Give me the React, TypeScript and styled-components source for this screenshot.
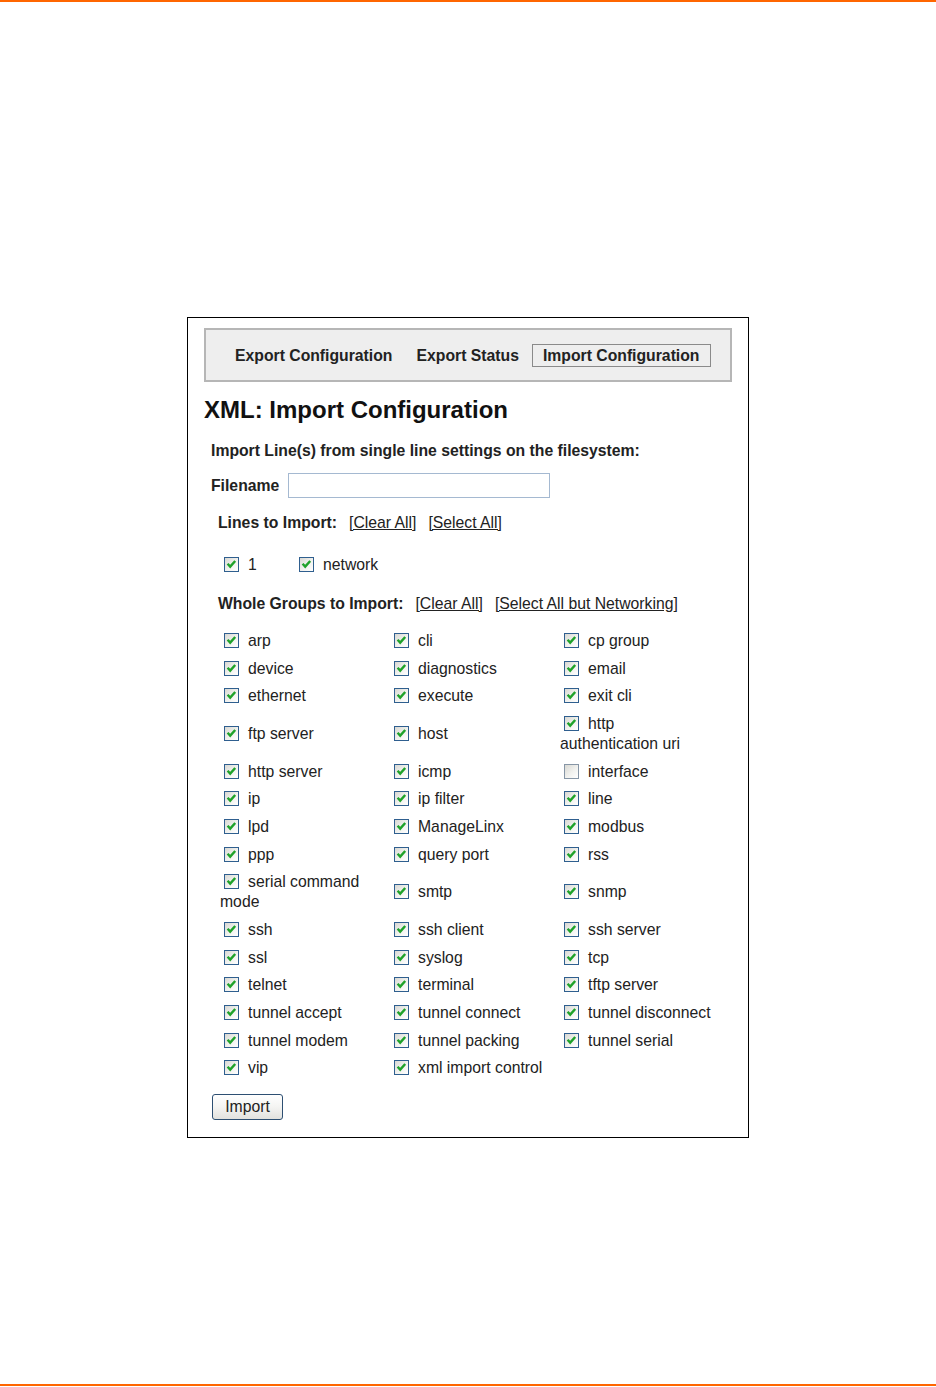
import React from 'react';
import styled, { createGlobalStyle } from 'styled-components';

const GlobalStyle = createGlobalStyle`
  html, body {
    margin: 0;
    padding: 0;
    background: #ffffff;
  }
  body {
    font-family: "Liberation Sans", Arial, sans-serif;
    font-size: 15.75px;
    color: #222222;
  }
`;

const Page = styled.div`
  width: 936px;
  min-height: 1387px;
  display: flex;
  flex-direction: column;
`;

const Rule = styled.div`
  height: 2px;
  background: #ff6600;
  flex-shrink: 0;
`;

const BottomRule = styled(Rule)`
  margin-bottom: 1px;
`;

const Main = styled.main`
  flex: 1;
  padding-top: 315px;
`;

const Panel = styled.section`
  width: 562px;
  box-sizing: border-box;
  margin: 0 auto;
  border: 1px solid #000000;
  padding: 10px 16px 17px 16px;
`;

const TabBar = styled.nav`
  height: 54px;
  box-sizing: border-box;
  border: 2px solid #b6b6b6;
  background: #eeeeee;
  display: flex;
  align-items: center;
  gap: 2px;
  padding-left: 18px;
`;

const Tab = styled.span<{ $active?: boolean }>`
  height: 23px;
  box-sizing: border-box;
  line-height: 21px;
  padding: 0 10px;
  border: 1px solid ${p => (p.$active ? '#8a8a8a' : 'transparent')};
  font-weight: bold;
  color: #222222;
  white-space: nowrap;
`;

const Heading = styled.h2`
  margin: 14px 0 0 0;
  font-size: 24px;
  line-height: 28px;
  font-weight: bold;
  color: #111111;
`;

const Form = styled.div`
  padding-left: 7px;
`;

const Intro = styled.div`
  margin-top: 17px;
  line-height: 20px;
  font-weight: bold;
`;

const FilenameRow = styled.div`
  margin-top: 12px;
  display: flex;
  align-items: center;
  gap: 9px;
  height: 25px;
`;

const Label = styled.span`
  font-weight: bold;
  white-space: nowrap;
`;

const TextInput = styled.input`
  width: 262px;
  height: 25px;
  box-sizing: border-box;
  border: 1px solid #a5b9d1;
  padding: 2px 4px;
  font-family: inherit;
  font-size: 15px;
  outline: none;
`;

const SectionHeader = styled.div<{ $top: number }>`
  margin-top: ${p => p.$top}px;
  margin-left: 7px;
  display: flex;
  align-items: center;
  gap: 12px;
  line-height: 20px;
`;

const LinkText = styled.a`
  color: #222222;
  text-decoration: underline;
  cursor: pointer;
  white-space: nowrap;
`;

const LineChoices = styled.div`
  margin-top: 22px;
  margin-left: 9px;
  display: flex;
  line-height: 20px;
`;

const LineChoice = styled.label<{ $width?: number }>`
  ${p => (p.$width ? `width: ${p.$width}px;` : '')}
  white-space: nowrap;
`;

const GroupGrid = styled.div`
  margin-top: 13px;
  margin-left: 9px;
  display: grid;
  grid-template-columns: repeat(3, 170px);
`;

const Cell = styled.label`
  display: flex;
  align-items: center;
  padding: 3.85px 0;
`;

const CellText = styled.span`
  display: block;
  line-height: 20px;
`;

const Box = styled.span<{ $checked: boolean }>`
  display: inline-block;
  position: relative;
  width: 15px;
  height: 15px;
  box-sizing: border-box;
  margin: 0 9px 0 4px;
  vertical-align: -2px;
  border: 1px solid ${p => (p.$checked ? '#2f5f8f' : '#8796a6')};
  background: linear-gradient(135deg, #d8d8d3 0%, #f2f2ef 55%, #ffffff 100%);

  svg {
    position: absolute;
    left: 0;
    top: 0;
  }
`;

const ImportButton = styled.button`
  margin: 12px 0 0 1px;
  width: 71px;
  height: 26px;
  box-sizing: border-box;
  padding: 0;
  border: 1px solid #2d4f72;
  border-radius: 3px;
  background: linear-gradient(#ffffff 0%, #f4f4f2 50%, #e2e2de 100%);
  font-family: inherit;
  font-size: 15.75px;
  color: #222222;
  cursor: pointer;
`;

const Checkbox = ({ checked = true }: { checked?: boolean }) => (
  <Box $checked={checked}>
    {checked && (
      <svg width="13" height="13" viewBox="0 0 13 13">
        <path d="M2.6 5.8 L5.2 8.6 L10.2 3" fill="none" stroke="#1fa22a" strokeWidth="2.4" />
      </svg>
    )}
  </Box>
);

const groups: [string, boolean][] = [
  ['arp', true], ['cli', true], ['cp group', true],
  ['device', true], ['diagnostics', true], ['email', true],
  ['ethernet', true], ['execute', true], ['exit cli', true],
  ['ftp server', true], ['host', true], ['http authentication\u00a0uri', true],
  ['http server', true], ['icmp', true], ['interface', false],
  ['ip', true], ['ip filter', true], ['line', true],
  ['lpd', true], ['ManageLinx', true], ['modbus', true],
  ['ppp', true], ['query port', true], ['rss', true],
  ['serial command mode', true], ['smtp', true], ['snmp', true],
  ['ssh', true], ['ssh client', true], ['ssh server', true],
  ['ssl', true], ['syslog', true], ['tcp', true],
  ['telnet', true], ['terminal', true], ['tftp server', true],
  ['tunnel accept', true], ['tunnel connect', true], ['tunnel disconnect', true],
  ['tunnel modem', true], ['tunnel packing', true], ['tunnel serial', true],
  ['vip', true], ['xml import control', true],
];

const App: React.FC = () => {
  return (
    <>
      <GlobalStyle />
      <Page>
        <Rule />
        <Main>
          <Panel>
            <TabBar>
              <Tab>Export Configuration</Tab>
              <Tab>Export Status</Tab>
              <Tab $active>Import Configuration</Tab>
            </TabBar>

            <Heading>XML: Import Configuration</Heading>

            <Form>
              <Intro>Import Line(s) from single line settings on the filesystem:</Intro>

              <FilenameRow>
                <Label>Filename</Label>
                <TextInput type="text" />
              </FilenameRow>

              <SectionHeader $top={15}>
                <Label>Lines to Import:</Label>
                <LinkText>[Clear All]</LinkText>
                <LinkText>[Select All]</LinkText>
              </SectionHeader>

              <LineChoices>
                <LineChoice $width={75}>
                  <Checkbox />1
                </LineChoice>
                <LineChoice>
                  <Checkbox />network
                </LineChoice>
              </LineChoices>

              <SectionHeader $top={19}>
                <Label>Whole Groups to Import:</Label>
                <LinkText>[Clear All]</LinkText>
                <LinkText>[Select All but Networking]</LinkText>
              </SectionHeader>

              <GroupGrid>
                {groups.map(([name, checked]) => (
                  <Cell key={name}>
                    <CellText>
                      <Checkbox checked={checked} />
                      {name}
                    </CellText>
                  </Cell>
                ))}
              </GroupGrid>

              <ImportButton type="button">Import</ImportButton>
            </Form>
          </Panel>
        </Main>
        <BottomRule />
      </Page>
    </>
  );
};

export default App;
